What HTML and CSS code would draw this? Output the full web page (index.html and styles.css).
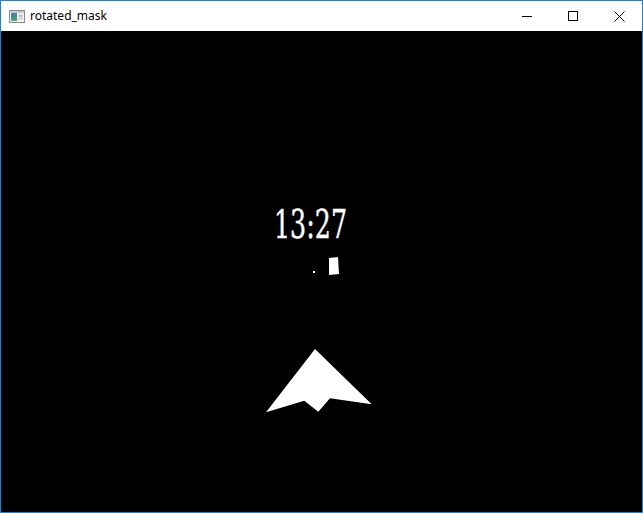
FILE: index.html
```html
<!DOCTYPE html>
<html>
<head>
<meta charset="utf-8">
<title>rotated_mask</title>
<link rel="stylesheet" href="styles.css">
</head>
<body>
<div class="window">
  <div class="titlebar">
    <svg class="app-icon" width="16" height="13" viewBox="0 0 16 13">
      <defs>
        <linearGradient id="ig" x1="0" y1="0" x2="0" y2="1">
          <stop offset="0" stop-color="#4a7fb0"/>
          <stop offset="0.5" stop-color="#3f8f8a"/>
          <stop offset="1" stop-color="#5aa56a"/>
        </linearGradient>
      </defs>
      <rect x="0.5" y="0.5" width="15" height="12" fill="#f2f2f2" stroke="#8a8a8a"/>
      <rect x="1" y="1" width="14" height="2" fill="#c9c9c9"/>
      <rect x="2" y="3" width="6" height="8" fill="url(#ig)"/>
      <rect x="9" y="4" width="5" height="6" fill="#dcdcdc"/>
      <rect x="10" y="5" width="3" height="2" fill="#b8c8b8"/>
    </svg>
    <span class="title">rotated_mask</span>
    <div class="controls">
      <div class="btn">
        <svg width="10" height="10" viewBox="0 0 10 10"><line x1="0" y1="5.5" x2="10" y2="5.5" stroke="#000" stroke-width="1"/></svg>
      </div>
      <div class="btn">
        <svg width="10" height="10" viewBox="0 0 10 10"><rect x="0.5" y="0.5" width="9" height="9" fill="none" stroke="#000" stroke-width="1"/></svg>
      </div>
      <div class="btn">
        <svg width="11" height="11" viewBox="0 0 11 11"><path d="M0.5 0.5 L10.5 10.5 M10.5 0.5 L0.5 10.5" stroke="#000" stroke-width="1" fill="none"/></svg>
      </div>
    </div>
  </div>
  <div class="canvas">
    <svg class="mask" width="641" height="481" viewBox="1 31 641 481">
      <text class="clock" x="274" y="238" textLength="73" lengthAdjust="spacingAndGlyphs">13:27</text>
      <polygon class="shape" points="329,258 338,257 339,274 329,275"/>
      <rect class="shape" x="313" y="271" width="2" height="2"/>
      <polygon class="shape" points="315,349 371.7,404.3 330,398.3 318.3,411.7 304.3,400.7 266,412.3"/>
    </svg>
  </div>
</div>
</body>
</html>
```

FILE: styles.css
```css
html, body {
  margin: 0;
  padding: 0;
  background: #ffffff;
}

.window {
  width: 643px;
  height: 513px;
  box-sizing: border-box;
  border: 1px solid #1883d7;
  display: flex;
  flex-direction: column;
  overflow: hidden;
}

.titlebar {
  height: 30px;
  flex: none;
  display: flex;
  align-items: center;
  background: #ffffff;
}

.app-icon {
  margin-left: 8px;
  flex: none;
  display: block;
}

.title {
  margin-left: 5px;
  font-family: "Noto Sans", "Liberation Sans", sans-serif;
  font-size: 12px;
  color: #000000;
  line-height: 1;
}

.controls {
  margin-left: auto;
  display: flex;
  align-self: stretch;
}

.btn {
  width: 46px;
  height: 30px;
  display: flex;
  align-items: center;
  justify-content: center;
}

.btn svg {
  display: block;
}

.canvas {
  flex: 1;
  background: #000000;
}

.mask {
  display: block;
}

.clock {
  font-family: "DejaVu Serif", serif;
  font-stretch: condensed;
  font-size: 40px;
  fill: #ffffff;
  stroke: #ffffff;
  stroke-width: 0.4px;
}

.shape {
  fill: #ffffff;
}
```
